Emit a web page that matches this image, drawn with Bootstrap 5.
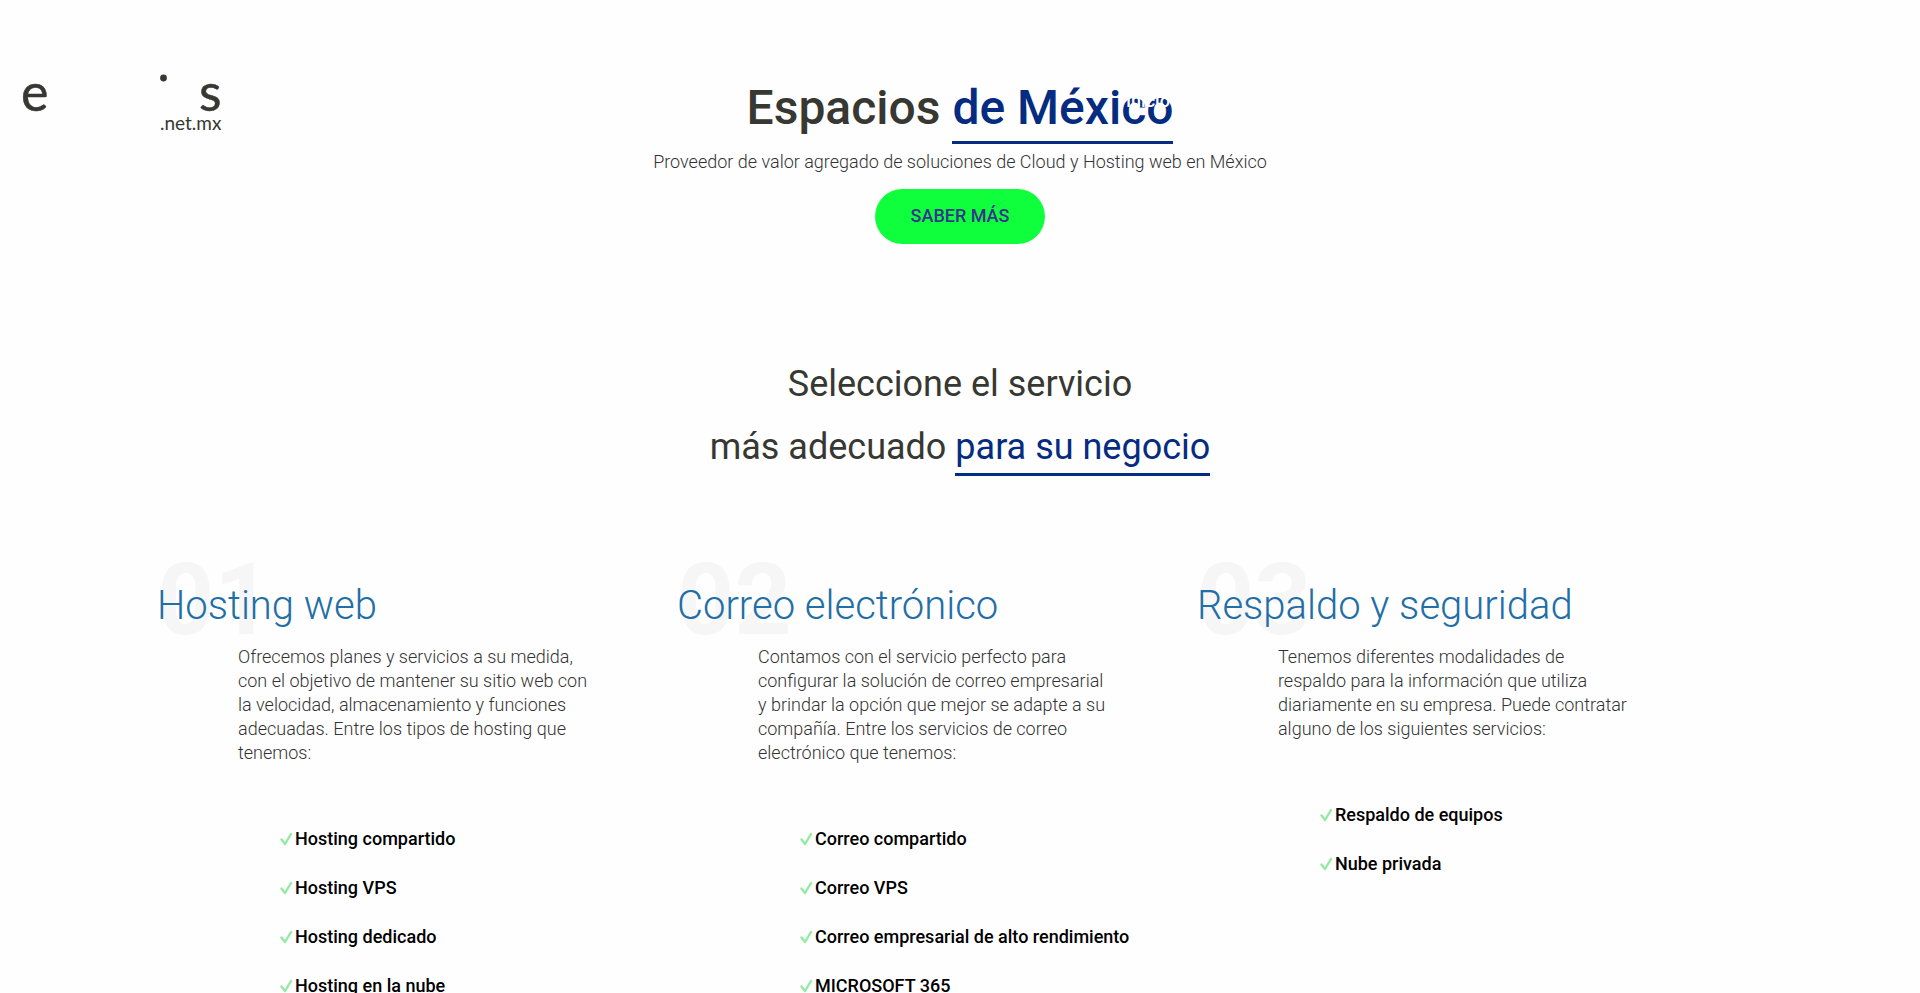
<!DOCTYPE html>
<html lang="es">
<head>
<meta charset="utf-8">
<meta name="viewport" content="width=device-width, initial-scale=1">
<title>Espacios de México</title>
<link href="https://cdn.jsdelivr.net/npm/bootstrap@5.3.0/dist/css/bootstrap.min.css" rel="stylesheet">
<style>
body { font-family: Roboto, "Liberation Sans", sans-serif; font-size: 18px; line-height: 24px; font-weight: 300; color: #333; background: #fefefe; overflow-x: hidden; }
.site-header { top: 60px; z-index: 10; }
.site-header .nav-link { color: #fff; font-weight: 500; margin: 29px 0 0 6px; }
.brand-logo { display: block; width: 240px; height: 80px; }
.hero { padding-top: 77px; }
.hero h1 { font-size: 48px; line-height: 62px; font-weight: 500; color: #373832; margin-bottom: 11px; }
.accent { color: #052c80; border-bottom: 3px solid #052c80; padding-bottom: 5px; }
.hero p { margin-bottom: 15px; }
.btn-more { background: #10ff3c; color: #34348c; font-size: 18px; font-weight: 500; line-height: 23px; border: 0; border-radius: 28px; padding: 15px 36px 17px; }
.btn-more:hover { background: #0be034; color: #34348c; }
.pick h2 { font-size: 36px; line-height: 63px; font-weight: 400; color: #373832; }
.pick { padding-top: 109px; }
.services { padding: 103px 181px 48px 179px; }
.service-title { font-size: 40px; line-height: 48px; font-weight: 300; color: #226ea6; margin: 0 0 15px -22px; }
.service-number { left: 0; top: -32px; font-size: 100px; line-height: 100px; font-weight: 700; color: #f6f6f6; z-index: -1; }
.service-body { padding: 0 107px 0 59px; }
.service-body p { margin-bottom: 59px; }
.checks { padding-left: 42px; }
.checks li { height: 49px; padding-top: 3px; white-space: nowrap; font-weight: 500; }
.checks a { color: #000; text-decoration: none; }
.check-icon { width: 15px; height: 16px; flex: none; }
.check-icon path { fill: none; stroke: #94eaa4; stroke-width: 2.400; stroke-linecap: round; stroke-linejoin: round; }
</style>
</head>
<body>
<header class="site-header position-absolute start-0 w-100">
  <div class="row g-0">
    <div class="col-7">
      <a href="#" class="d-inline-block" aria-label="espacios.net.mx">
        <svg class="brand-logo" viewBox="0 0 240 80" fill="#373832" font-family="Lato, sans-serif" font-weight="400">
          <text x="21" y="51" font-size="52" stroke="#373832" stroke-width="0.500">e</text>
          <text x="199" y="51" font-size="52" stroke="#373832" stroke-width="0.500">s</text>
          <circle cx="163.500" cy="18" r="3.400"/>
          <text x="160" y="70" font-size="19">.net.mx</text>
        </svg>
      </a>
    </div>
    <nav class="col-5"><a class="nav-link d-inline-block p-0" href="#">Inicio</a></nav>
  </div>
</header>
<main class="position-relative">
  <section class="hero text-center">
    <h1>Espacios <span class="accent">de México</span></h1>
    <p>Proveedor de valor agregado de soluciones de Cloud y Hosting web en México</p>
    <button type="button" class="btn btn-more">SABER MÁS</button>
  </section>
  <section class="pick text-center">
    <h2 class="mb-0">Seleccione el servicio<br>más adecuado <span class="accent">para su negocio</span></h2>
  </section>
  <section class="services">
    <div class="row g-0">
      <article class="col-4">
        <h3 class="service-title position-relative"><span class="service-number position-absolute">01</span>Hosting web</h3>
        <div class="service-body">
          <p>Ofrecemos planes y servicios a su medida, con el objetivo de mantener su sitio web con la velocidad, almacenamiento y funciones adecuadas. Entre los tipos de hosting que tenemos:</p>
          <ul class="checks list-unstyled mb-0">
            <li><a href="#" class="d-flex align-items-center"><svg class="check-icon" viewBox="0 0 15 16"><path d="M1.500 8.500 5 13 11 3"/></svg>Hosting compartido</a></li>
            <li><a href="#" class="d-flex align-items-center"><svg class="check-icon" viewBox="0 0 15 16"><path d="M1.500 8.500 5 13 11 3"/></svg>Hosting VPS</a></li>
            <li><a href="#" class="d-flex align-items-center"><svg class="check-icon" viewBox="0 0 15 16"><path d="M1.500 8.500 5 13 11 3"/></svg>Hosting dedicado</a></li>
            <li><a href="#" class="d-flex align-items-center"><svg class="check-icon" viewBox="0 0 15 16"><path d="M1.500 8.500 5 13 11 3"/></svg>Hosting en la nube</a></li>
          </ul>
        </div>
      </article>
      <article class="col-4">
        <h3 class="service-title position-relative"><span class="service-number position-absolute">02</span>Correo electrónico</h3>
        <div class="service-body">
          <p>Contamos con el servicio perfecto para configurar la solución de correo empresarial y brindar la opción que mejor se adapte a su compañía. Entre los servicios de correo electrónico que tenemos:</p>
          <ul class="checks list-unstyled mb-0">
            <li><a href="#" class="d-flex align-items-center"><svg class="check-icon" viewBox="0 0 15 16"><path d="M1.500 8.500 5 13 11 3"/></svg>Correo compartido</a></li>
            <li><a href="#" class="d-flex align-items-center"><svg class="check-icon" viewBox="0 0 15 16"><path d="M1.500 8.500 5 13 11 3"/></svg>Correo VPS</a></li>
            <li><a href="#" class="d-flex align-items-center"><svg class="check-icon" viewBox="0 0 15 16"><path d="M1.500 8.500 5 13 11 3"/></svg>Correo empresarial de alto rendimiento</a></li>
            <li><a href="#" class="d-flex align-items-center"><svg class="check-icon" viewBox="0 0 15 16"><path d="M1.500 8.500 5 13 11 3"/></svg>MICROSOFT 365</a></li>
          </ul>
        </div>
      </article>
      <article class="col-4">
        <h3 class="service-title position-relative"><span class="service-number position-absolute">03</span>Respaldo y seguridad</h3>
        <div class="service-body">
          <p>Tenemos diferentes modalidades de respaldo para la información que utiliza diariamente en su empresa. Puede contratar alguno de los siguientes servicios:</p>
          <ul class="checks list-unstyled mb-0">
            <li><a href="#" class="d-flex align-items-center"><svg class="check-icon" viewBox="0 0 15 16"><path d="M1.500 8.500 5 13 11 3"/></svg>Respaldo de equipos</a></li>
            <li><a href="#" class="d-flex align-items-center"><svg class="check-icon" viewBox="0 0 15 16"><path d="M1.500 8.500 5 13 11 3"/></svg>Nube privada</a></li>
          </ul>
        </div>
      </article>
    </div>
  </section>
</main>
<script src="https://cdn.jsdelivr.net/npm/bootstrap@5.3.0/dist/js/bootstrap.bundle.min.js"></script>
</body>
</html>
